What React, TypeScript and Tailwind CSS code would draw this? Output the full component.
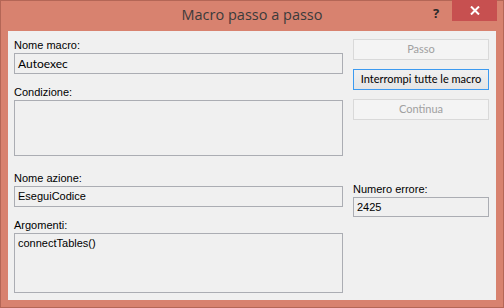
import React from "react";

// Macro passo a passo dialog (Access, Windows 8 frame)
const ui = { fontFamily: '"Open Sans", "Noto Sans", sans-serif' };
const btn = { fontFamily: 'Lato, "Open Sans", sans-serif' };
const tah = { fontFamily: '"Liberation Sans", Arial, sans-serif' };

function Label({ text, className = "" }: { text: string; className?: string }) {
	return (
		<div className={`h-[14px] text-[11px] leading-[14px] text-black ${className}`} style={tah}>
			{text}
		</div>
	);
}

function Field({ value, h, font = "ui" }: { value?: string; h: string; font?: "ui" | "tah" }) {
	return (
		<div
			className={`${h} border border-[#abadb3] bg-[#f0f0f0] px-[3px] pt-[2px] text-black ${font === "ui" ? "text-[12px] leading-[16px]" : "text-[11px] leading-[15px]"}`}
			style={font === "ui" ? btn : tah}
		>
			{value}
		</div>
	);
}

function Btn({ text, active }: { text: string; active?: boolean }) {
	return (
		<div
			className={`flex h-[21px] items-center justify-center whitespace-nowrap border text-[11px] ${active ? "border-[#3c9af0] bg-gradient-to-b from-[#f0f0f0] to-[#e5e5e5] text-black" : "border-[#d9d9d9] bg-[#f4f4f4] text-[#a0a0a0]"}`}
			style={btn}
		>
			{text}
		</div>
	);
}

export default function App() {
	return (
		<div className="flex h-[308px] w-[504px] flex-col border border-[#b46656] bg-[#d8826f]">
			{/* title bar */}
			<div className="relative flex h-[30px] items-center justify-center">
				<span className="pb-[2px] text-[14.5px] text-[#3b3b3b]" style={ui}>
					Macro passo a passo
				</span>
				<span className="absolute left-[432px] top-[3px] text-[13px] font-bold text-[#2a2a2a]" style={ui}>
					?
				</span>
				<div className="absolute left-[451px] top-[-1px] flex h-[21px] w-[45px] items-center justify-center bg-[#c75050]">
					<svg width="10" height="9" viewBox="0 0 10 9">
						<path d="M1 0.5 L9 8.5 M9 0.5 L1 8.5" stroke="#fff" strokeWidth="2" />
					</svg>
				</div>
			</div>

			{/* client area */}
			<div className="mx-[7px] flex h-[269px] gap-[10px] bg-[#f0f0f0] pl-[6px]">
				<div className="flex w-[329px] flex-col pt-[7px]">
					<Label text="Nome macro:" />
					<div className="mt-[1px]">
						<Field value="Autoexec" h="h-[21px]" />
					</div>
					<Label text="Condizione:" className="mt-[11px]" />
					<div className="mt-[1px]">
						<Field h="h-[56px]" />
					</div>
					<Label text="Nome azione:" className="mt-[15px]" />
					<div className="mt-[1px]">
						<Field value="EseguiCodice" h="h-[21px]" font="tah" />
					</div>
					<Label text="Argomenti:" className="mt-[11px]" />
					<div className="mt-[1px]">
						<Field value="connectTables()" h="h-[60px]" font="tah" />
					</div>
				</div>

				<div className="flex w-[136px] flex-col pt-[8px]">
					<div className="flex flex-col gap-[9px]">
						<Btn text="Passo" />
						<Btn text="Interrompi tutte le macro" active />
						<Btn text="Continua" />
					</div>
					<Label text="Numero errore:" className="mt-[62px]" />
					<div className="mt-[1px]">
						<Field value="2425" h="h-[20px]" font="tah" />
					</div>
				</div>
			</div>
		</div>
	);
}
